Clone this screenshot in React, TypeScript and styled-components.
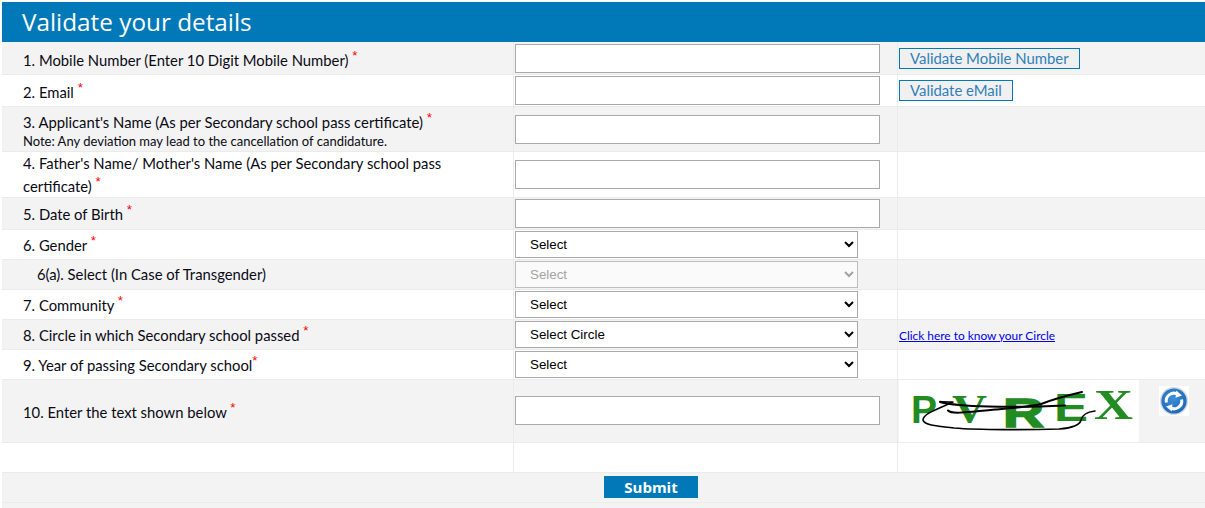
import React from "react";
import styled, { createGlobalStyle } from "styled-components";

const Global = createGlobalStyle`
  html, body { margin: 0; padding: 0; background: #fff; }
  #root { min-height: 508px; }
`;

const Page = styled.div`
  height: 508px;
  padding: 2px 0 0 2px;
  box-sizing: border-box;
  overflow: hidden;
  font-family: Lato, "Open Sans", sans-serif;
  color: #0a0a14;
`;

const Title = styled.h1`
  margin: 0;
  height: 40px;
  padding-left: 20px;
  background: #0179b8;
  color: #fff;
  font: 400 24.3px/39px "Open Sans", sans-serif;
`;

const Row = styled.div<{ $h: number; $alt?: boolean }>`
  display: grid;
  grid-template-columns: 512px 384px 1fr;
  grid-template-rows: minmax(0, 1fr);
  height: ${(p) => p.$h}px;
  box-sizing: border-box;
  border-bottom: 1px solid #ebebeb;
  background: ${(p) => (p.$alt ? "#f3f3f3" : "#fff")};
`;

const LabelCell = styled.div<{ $indent?: boolean; $shift?: number }>`
  display: flex;
  flex-direction: column;
  justify-content: center;
  box-sizing: border-box;
  padding: ${(p) => (p.$shift ?? 1) * 2}px 40px 0 ${(p) => (p.$indent ? 35 : 21)}px;
  border-right: 1px solid #ebebeb;
  font-size: 14.82px;
  line-height: 23px;
`;

const Note = styled.span`
  font-size: 13px;
  line-height: 15px;
`;

const Star = styled.sup`
  color: #f00;
  font: 13.5px/0 "Liberation Sans", sans-serif;
`;

const FieldCell = styled.div<{ $lift?: boolean }>`
  display: flex;
  align-items: center;
  box-sizing: border-box;
  padding: 0 0 ${(p) => (p.$lift ? 1 : 0)}px 1px;
  border-right: 1px solid #ebebeb;
`;

const AsideCell = styled.div<{ $top?: boolean }>`
  display: flex;
  align-items: ${(p) => (p.$top ? "flex-start" : "center")};
  padding-left: 1px;
`;

const TextInput = styled.input`
  width: 365px;
  height: 29px;
  box-sizing: border-box;
  border: 1px solid #a9a9a9;
  background: #fff;
  padding: 0 4px;
`;

const Dropdown = styled.select`
  width: 343px;
  height: 27px;
  box-sizing: border-box;
  border: 1px solid #a9a9a9;
  border-radius: 0;
  padding-left: 10px;
  background: #fff;
  color: #000;
  font: 13.33px "Liberation Sans", Arial, sans-serif;
  &:disabled {
    background: #fafafa;
    border-color: #bdbdbd;
    color: #a4a4a4;
    opacity: 1;
  }
`;

const ValidateButton = styled.button`
  height: 21px;
  padding: 0 10px;
  box-sizing: border-box;
  border: 1px solid #0179b8;
  background: #f0f0f0;
  color: #2f7fb8;
  font: 400 14.9px/19px Lato, sans-serif;
`;

const CircleLink = styled.a`
  color: #0000ee;
  font-size: 11.9px;
  line-height: 14px;
  padding-top: 2px;
  text-decoration: underline;
`;

const CaptchaWrap = styled.div`
  display: flex;
  align-items: flex-start;
  gap: 20px;
`;

const SubmitRow = styled.div`
  height: 30px;
  box-sizing: border-box;
  padding: 3px 0 0 602px;
  border-bottom: 1px solid #ebebeb;
  background: #f3f3f3;
`;

const SubmitButton = styled.button`
  display: block;
  width: 94px;
  height: 22px;
  padding: 0;
  border: 0;
  background: #0179b8;
  color: #fff;
  font: 700 15px/22px "Open Sans", sans-serif;
`;

const Tail = styled.div`
  height: 5px;
  background: #f3f3f3;
`;

const Captcha = () => (
  <svg width="240" height="62" viewBox="0 0 240 62" style={{ display: "block" }}>
    <rect width="240" height="62" fill="#fff" />
    <g fill="#228b22">
      <text x="12" y="43" fontFamily="Liberation Sans" fontWeight="700" fontSize="38" textLength="26" lengthAdjust="spacingAndGlyphs">P</text>
      <text x="53" y="42" fontFamily="Liberation Serif" fontWeight="700" fontSize="41" textLength="35" lengthAdjust="spacingAndGlyphs">V</text>
      <text x="104" y="47" fontFamily="Liberation Sans" fontWeight="700" fontSize="40" stroke="#228b22" strokeWidth="1.5" textLength="41" lengthAdjust="spacingAndGlyphs">R</text>
      <text x="155" y="41" fontFamily="Liberation Sans" fontWeight="700" fontSize="38" textLength="34" lengthAdjust="spacingAndGlyphs">E</text>
      <text x="195" y="39" fontFamily="Liberation Serif" fontWeight="700" fontSize="43" textLength="39" lengthAdjust="spacingAndGlyphs">X</text>
    </g>
    <g fill="none" stroke="#000" strokeWidth="1.6" strokeLinecap="round" strokeLinejoin="round">
      <path d="M196 31C188 32 183 35 182 40C181 46 172 48 160 49C130 50 80 50 55 48C36 46 25 45 24 40C24 34 36 30 54 22C50 22 45 22 41 21.5" />
      <path d="M41 22C60 27 110 28 166 25.5" strokeWidth="2" />
      <path d="M49 30.5C52 34 62 33 96 29.5C115 28 130 27 142 24C155 19 170 15 183 12" strokeWidth="2" />
    </g>
  </svg>
);

const Refresh = () => (
  <svg width="30" height="30" viewBox="0 0 30 30" style={{ display: "block", marginTop: 6 }}>
    <defs>
      <radialGradient id="rb" cx="45%" cy="40%" r="65%">
        <stop offset="0" stopColor="#3d8fdc" />
        <stop offset="1" stopColor="#1c66b4" />
      </radialGradient>
    </defs>
    <rect width="30" height="30" fill="#fff" />
    <circle cx="15" cy="15" r="14" fill="#cfd8e0" />
    <circle cx="15" cy="15" r="12.6" fill="url(#rb)" />
    <g fill="none" stroke="#fff" strokeWidth="3">
      <path d="M7.4 16.5A7.7 7.7 0 0 1 19 8.4" />
      <path d="M22.6 13.5A7.7 7.7 0 0 1 11 21.6" />
    </g>
    <path d="M17.2 4.6L23 9.6L16.6 11.8Z" fill="#fff" />
    <path d="M12.8 25.4L7 20.4L13.4 18.2Z" fill="#fff" />
  </svg>
);

export default function App() {
  return (
    <Page>
      <Global />
      <Title>Validate your details</Title>
      <Row $h={33} $alt>
        <LabelCell $shift={2}><div>1. Mobile Number (Enter 10 Digit Mobile Number) <Star>*</Star></div></LabelCell>
        <FieldCell><TextInput /></FieldCell>
        <AsideCell><ValidateButton>Validate Mobile Number</ValidateButton></AsideCell>
      </Row>
      <Row $h={32}>
        <LabelCell $shift={2}><div>2. Email <Star>*</Star></div></LabelCell>
        <FieldCell><TextInput /></FieldCell>
        <AsideCell><ValidateButton>Validate eMail</ValidateButton></AsideCell>
      </Row>
      <Row $h={45} $alt>
        <LabelCell>
          <div>3. Applicant's Name (As per Secondary school pass certificate) <Star>*</Star></div>
          <Note>Note: Any deviation may lead to the cancellation of candidature.</Note>
        </LabelCell>
        <FieldCell><TextInput /></FieldCell>
        <AsideCell />
      </Row>
      <Row $h={46}>
        <LabelCell $shift={0.5}><div>4. Father's Name/ Mother's Name (As per Secondary school pass certificate) <Star>*</Star></div></LabelCell>
        <FieldCell><TextInput /></FieldCell>
        <AsideCell />
      </Row>
      <Row $h={32} $alt>
        <LabelCell><div>5. Date of Birth <Star>*</Star></div></LabelCell>
        <FieldCell><TextInput /></FieldCell>
        <AsideCell />
      </Row>
      <Row $h={30}>
        <LabelCell><div>6. Gender <Star>*</Star></div></LabelCell>
        <FieldCell><Dropdown><option>Select</option></Dropdown></FieldCell>
        <AsideCell />
      </Row>
      <Row $h={30} $alt>
        <LabelCell $indent $shift={0}><div>6(a). Select (In Case of Transgender)</div></LabelCell>
        <FieldCell><Dropdown disabled><option>Select</option></Dropdown></FieldCell>
        <AsideCell />
      </Row>
      <Row $h={30}>
        <LabelCell><div>7. Community <Star>*</Star></div></LabelCell>
        <FieldCell><Dropdown><option>Select</option></Dropdown></FieldCell>
        <AsideCell />
      </Row>
      <Row $h={30} $alt>
        <LabelCell><div>8. Circle in which Secondary school passed <Star>*</Star></div></LabelCell>
        <FieldCell><Dropdown><option>Select Circle</option></Dropdown></FieldCell>
        <AsideCell><CircleLink href="#">Click here to know your Circle</CircleLink></AsideCell>
      </Row>
      <Row $h={30}>
        <LabelCell><div>9. Year of passing Secondary school<Star>*</Star></div></LabelCell>
        <FieldCell><Dropdown><option>Select</option></Dropdown></FieldCell>
        <AsideCell />
      </Row>
      <Row $h={63} $alt>
        <LabelCell><div>10. Enter the text shown below <Star>*</Star></div></LabelCell>
        <FieldCell $lift><TextInput /></FieldCell>
        <AsideCell $top>
          <CaptchaWrap>
            <Captcha />
            <Refresh />
          </CaptchaWrap>
        </AsideCell>
      </Row>
      <Row $h={30}>
        <LabelCell />
        <FieldCell />
        <AsideCell />
      </Row>
      <SubmitRow><SubmitButton>Submit</SubmitButton></SubmitRow>
      <Tail />
    </Page>
  );
}
